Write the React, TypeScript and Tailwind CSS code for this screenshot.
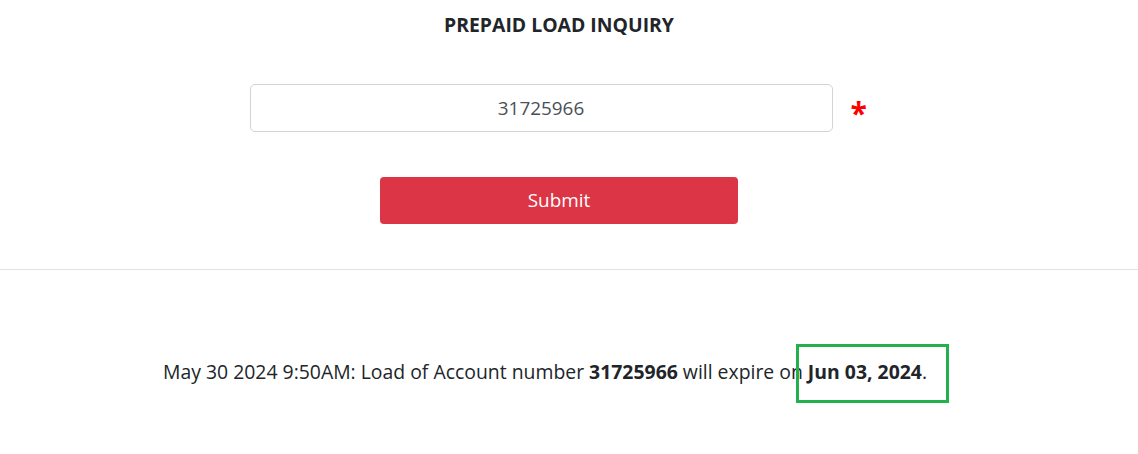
import React from "react";

export default function App() {
  return (
    <div
      className="w-[1138px] h-[454px] bg-white text-[#212529] overflow-hidden"
      style={{ fontFamily: '"Open Sans", "Noto Sans", sans-serif' }}
    >
      <div className="w-[1118px] flex flex-col items-center">
        <h1 className="mt-[11px] text-[19.4px] font-bold leading-[27px] text-[#212529]">
          PREPAID LOAD INQUIRY
        </h1>
        <div className="mt-[46px] flex items-center gap-[18px] pr-[4px]">
          <div className="w-[583px] h-[48px] border border-[#ced4da] rounded-[5px] flex items-center justify-center text-[18.9px] text-[#495057]">
            31725966
          </div>
          <span className="text-[#ff0000] text-[30px] font-bold leading-none mt-[10px] w-[14px]">*</span>
        </div>
        <button className="mt-[45px] w-[358px] h-[47px] rounded-[4px] bg-[#dc3545] text-white text-[18.9px]">
          Submit
        </button>
      </div>
      <div className="mt-[45px] h-px bg-[#dee2e6] w-full" />
      <div className="w-[1090px] mt-[88px] flex justify-center text-[19.4px] text-[#212529]">
        <p className="leading-[27px]">
          May 30 2024 9:50AM: Load of Account number <b>31725966</b> will expire on{" "}
          <span className="relative font-bold">
            Jun 03, 2024
            <span className="absolute left-[-12px] right-[-27px] top-[-14px] bottom-[-18px] border-[3px] border-[#22b14c]" />
          </span>
          .
        </p>
      </div>
    </div>
  );
}
